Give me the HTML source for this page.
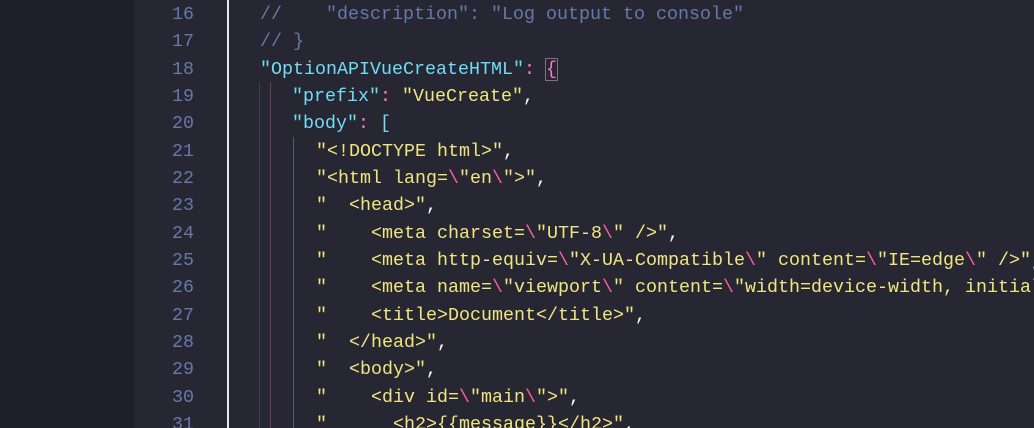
<!DOCTYPE html>
<html style="overflow:hidden;width:1034px;height:428px"><head><style>
body{margin:0;width:1034px;height:428px;overflow:hidden;background:#262733;position:relative;font-family:"Liberation Mono",monospace;font-size:18.33px}
.side{position:absolute;left:0;top:0;width:134px;height:428px;background:#1e1f28}
.cur{position:absolute;left:227px;top:0;width:2px;height:428px;background:#e8e8e8}
.g{position:absolute;width:1px}
.n{position:absolute;left:134px;width:60px;text-align:right;color:#6a77a8;line-height:27px}
.l{position:absolute;white-space:pre;line-height:27px;color:#f8f8f2}
.c{color:#6878ab}.k{color:#70dcf5}.s{color:#f0e57e}.e{color:#ff5f9a}.p{color:#ff79c6}.w{color:#f8f8f2}
.br{outline:1px solid #777;color:#ff79c6}
</style></head><body>
<div class="side"></div>
<div class="cur"></div>
<div class="g" style="left:259px;top:82px;height:346px;background:#3c3f4c"></div>
<div class="g" style="left:270px;top:82px;height:346px;background:#6a3a5e"></div>
<div class="g" style="left:293px;top:137px;height:291px;background:#3f6470"></div>
<div class="n" style="top:1px">16</div><div class="n" style="top:28px">17</div><div class="n" style="top:56px">18</div><div class="n" style="top:83px">19</div><div class="n" style="top:110px">20</div><div class="n" style="top:138px">21</div><div class="n" style="top:165px">22</div><div class="n" style="top:192px">23</div><div class="n" style="top:220px">24</div><div class="n" style="top:247px">25</div><div class="n" style="top:274px">26</div><div class="n" style="top:302px">27</div><div class="n" style="top:329px">28</div><div class="n" style="top:356px">29</div><div class="n" style="top:384px">30</div><div class="n" style="top:411px">31</div>
<div class="l c" style="left:260px;top:1px">//    "description": "Log output to console"</div>
<div class="l c" style="left:260px;top:28px">// }</div>
<div class="l" style="left:260px;top:56px"><span class="k">"OptionAPIVueCreateHTML"</span><span class="p">:</span> <span class="br">{</span></div>
<div class="l" style="left:292px;top:83px"><span class="k">"prefix"</span><span class="p">:</span> <span class="s">"VueCreate"</span>,</div>
<div class="l" style="left:292px;top:110px"><span class="k">"body"</span><span class="p">:</span> <span class="k">[</span></div>
<div class="l s" style="left:316px;top:138px">"&lt;!DOCTYPE html&gt;"<span class="w">,</span></div>
<div class="l s" style="left:316px;top:165px">"&lt;html lang=<span class="e">\</span>"en<span class="e">\</span>"&gt;"<span class="w">,</span></div>
<div class="l s" style="left:316px;top:192px">"  &lt;head&gt;"<span class="w">,</span></div>
<div class="l s" style="left:316px;top:220px">"    &lt;meta charset=<span class="e">\</span>"UTF-8<span class="e">\</span>" /&gt;"<span class="w">,</span></div>
<div class="l s" style="left:316px;top:247px">"    &lt;meta http-equiv=<span class="e">\</span>"X-UA-Compatible<span class="e">\</span>" content=<span class="e">\</span>"IE=edge<span class="e">\</span>" /&gt;"<span class="w">,</span></div>
<div class="l s" style="left:316px;top:274px">"    &lt;meta name=<span class="e">\</span>"viewport<span class="e">\</span>" content=<span class="e">\</span>"width=device-width, initial</div>
<div class="l s" style="left:316px;top:302px">"    &lt;title&gt;Document&lt;/title&gt;"<span class="w">,</span></div>
<div class="l s" style="left:316px;top:329px">"  &lt;/head&gt;"<span class="w">,</span></div>
<div class="l s" style="left:316px;top:356px">"  &lt;body&gt;"<span class="w">,</span></div>
<div class="l s" style="left:316px;top:384px">"    &lt;div id=<span class="e">\</span>"main<span class="e">\</span>"&gt;"<span class="w">,</span></div>
<div class="l s" style="left:316px;top:411px">"      &lt;h2&gt;{{message}}&lt;/h2&gt;"<span class="w">,</span></div>
</body></html>
